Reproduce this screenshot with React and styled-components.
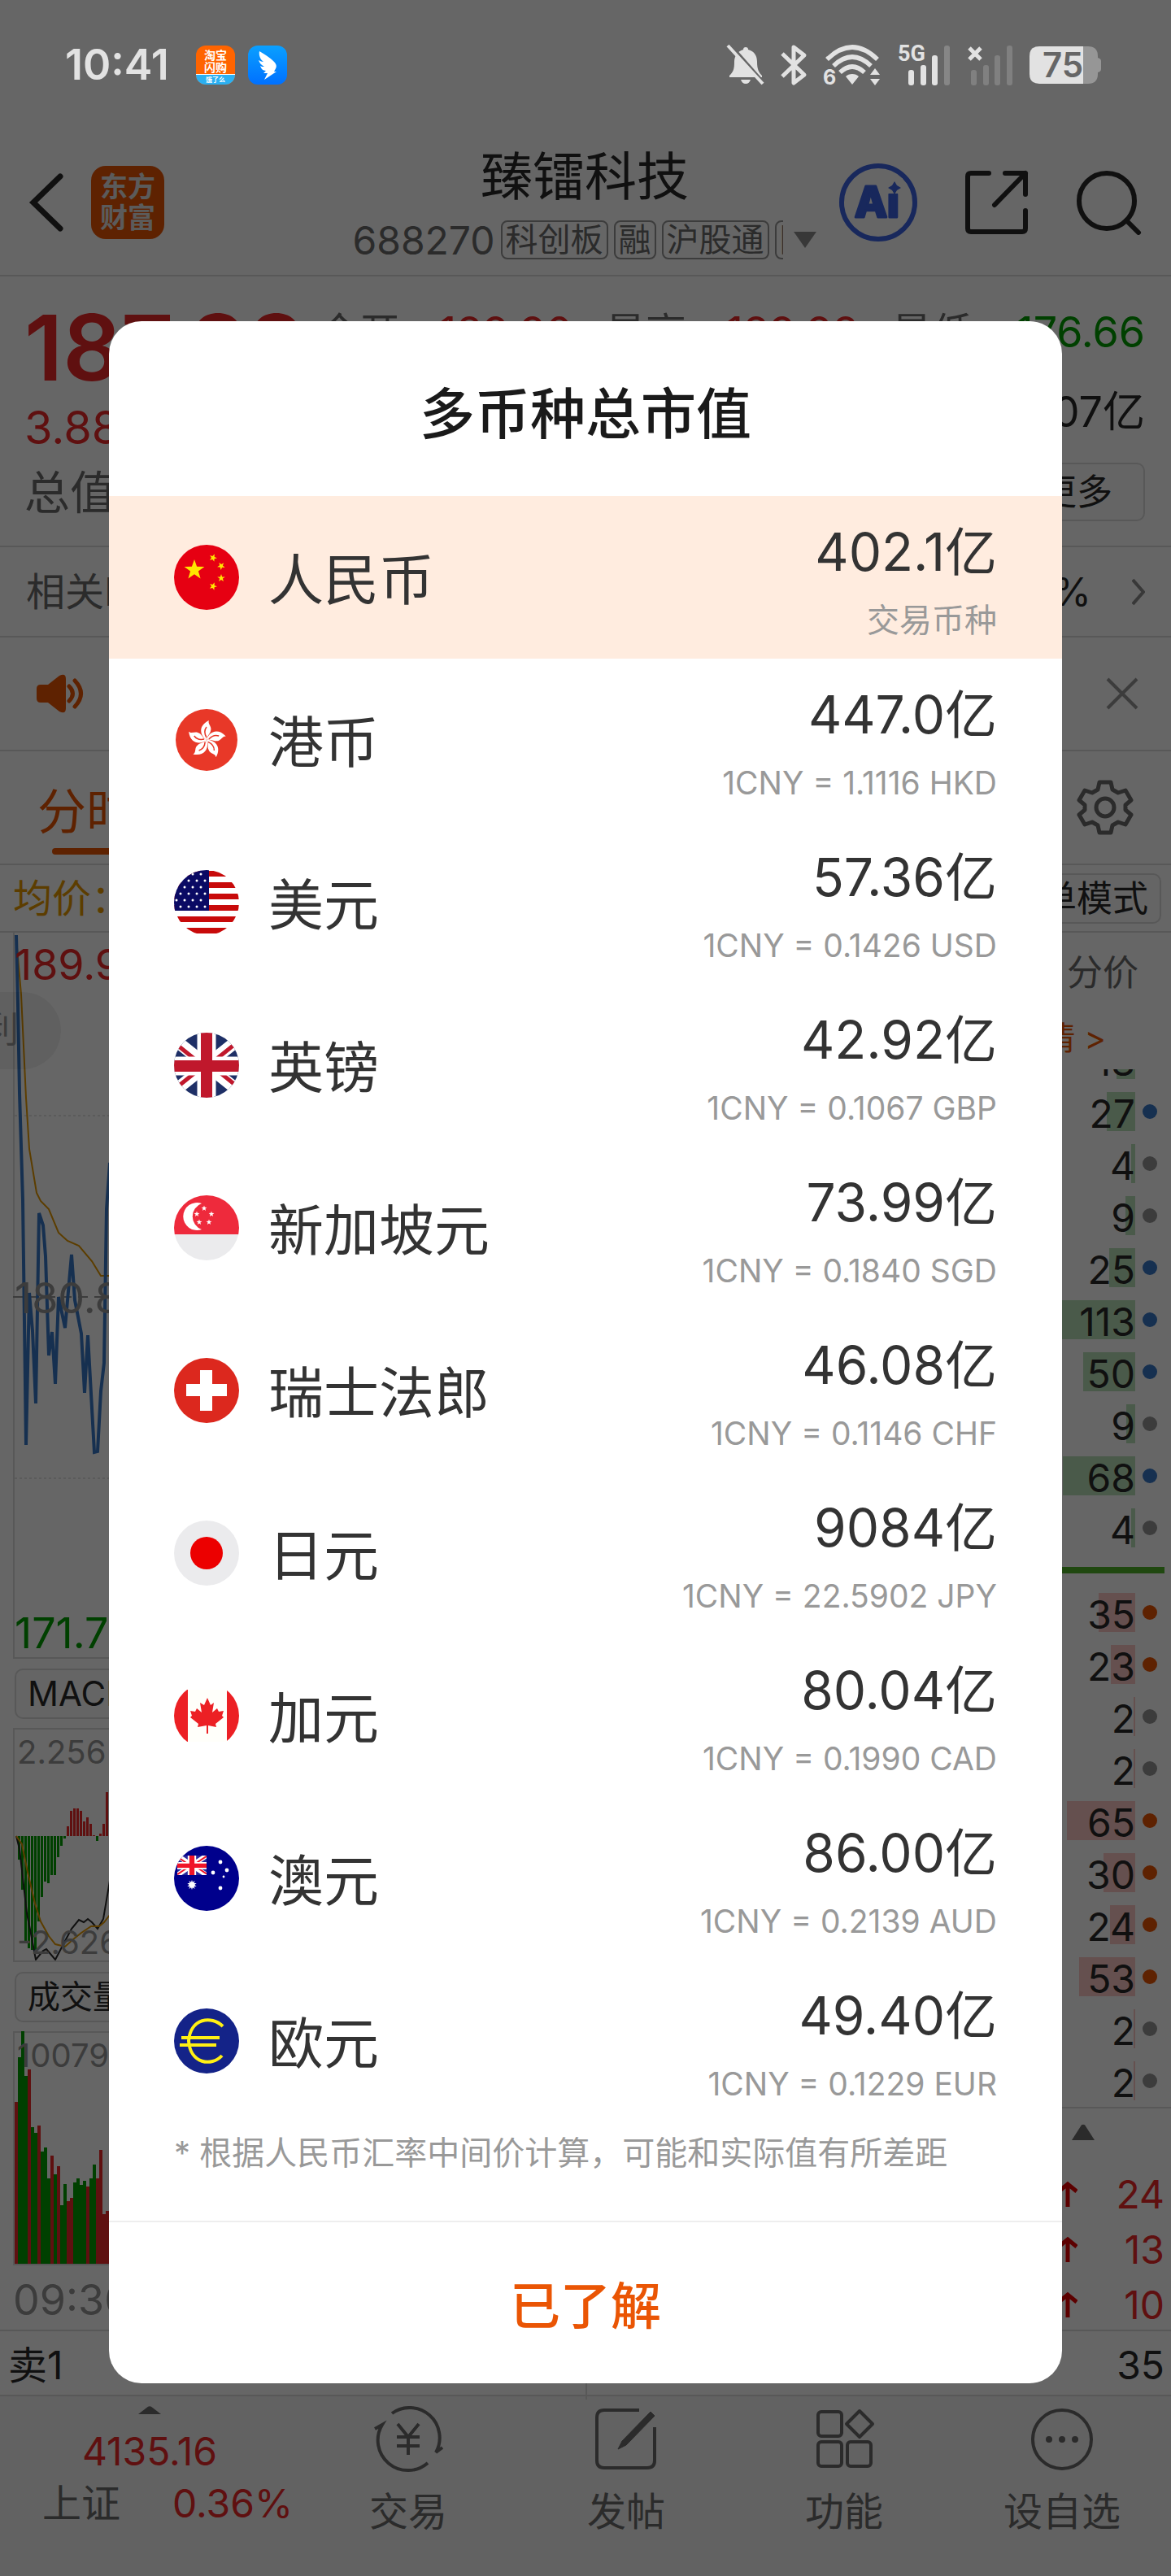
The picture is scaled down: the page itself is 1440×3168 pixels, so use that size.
import React from "react";
import styled, { createGlobalStyle, css } from "styled-components";

const c = {
  ink: "#2a2a2a",
  grey: "#6b6b6b",
  faint: "#969696",
  line: "#dcdcdc",
  red: "#ee2828",
  green: "#00a000",
  orange: "#ea5504",
  amber: "#e69a00",
  blue: "#3778c8",
};

const Global = createGlobalStyle`
  * { box-sizing: border-box; }
  body { margin: 0; background: #fff; }
  body, button { font-family: Inter, "Noto Sans CJK SC", sans-serif; }
  button { padding: 0; border: 0; background: none; color: inherit; cursor: pointer; }
  ul, h1, h2, p { margin: 0; padding: 0; font-weight: 400; list-style: none; }
  svg { display: block; flex: none; }
`;

const Screen = styled.div`
  position: relative;
  color: ${c.ink};
  background: #fff;
`;

/* ---------- status bar ---------- */
const StatusBar = styled.div`
  position: relative;
  z-index: 2;
  display: flex;
  align-items: center;
  height: 160px;
  padding: 0 86px 0 80px;
  color: #e2e2e2;
`;
const Clock = styled.span`
  width: 161px;
  font-size: 52px;
  font-weight: 600;
  line-height: 60px;
`;
const AppIcon = styled.span`
  display: flex;
  flex-direction: column;
  width: 48px;
  height: 48px;
  margin-right: 16px;
  border-radius: 12px;
  overflow: hidden;
  background: ${(p) => p.$bg};
  color: #fff;
  font-size: 14px;
  font-weight: 700;
  line-height: 15px;
  text-align: center;
`;
const AppIconTop = styled.span`
  flex: 1;
  padding-top: 4px;
  white-space: pre-line;
`;
const AppIconFoot = styled.span`
  border-top: 1px solid #fff;
  background: #2bb0f2;
  font-size: 8px;
  line-height: 12px;
`;
const StatusIcons = styled.div`
  display: flex;
  align-items: center;
  margin-left: auto;
  gap: 20px;
  svg { overflow: visible; }
`;

/* ---------- header ---------- */
const Header = styled.header`
  display: grid;
  grid-template-columns: 1fr auto 1fr;
  align-items: center;
  height: 180px;
  padding: 0 36px 0 34px;
  border-bottom: 2px solid ${c.line};
`;
const HeaderLeft = styled.div`
  display: flex;
  align-items: center;
  gap: 32px;
`;
const HeaderRight = styled.div`
  display: flex;
  align-items: center;
  justify-content: flex-end;
  gap: 58px;
`;
const BrandMark = styled.span`
  width: 90px;
  height: 90px;
  padding-top: 7px;
  border-radius: 18px;
  background: ${c.orange};
  color: #e4e4e4;
  font-size: 34px;
  font-weight: 700;
  line-height: 38px;
  text-align: center;
`;
const StockHeading = styled.div`
  display: flex;
  flex-direction: column;
  align-items: center;
  gap: 18px;
  padding-top: 2px;
`;
const StockName = styled.h1`
  font-size: 64px;
  line-height: 72px;
`;
const StockMeta = styled.div`
  display: flex;
  align-items: center;
  gap: 7px;
  height: 48px;
  color: ${c.grey};
  font-size: 48px;
`;
const Tag = styled.span`
  flex: none;
  height: 48px;
  padding: 0 4px;
  border: 2px solid ${c.faint};
  border-radius: 8px;
  font-size: 40px;
  line-height: 44px;
`;
const TagClip = styled.span`
  display: flex;
  width: 10px;
  margin-right: 5px;
  overflow: hidden;
`;
const IconButton = styled.button`
  display: flex;
  align-items: center;
  justify-content: center;
`;

/* ---------- quote ---------- */
const Quote = styled.section`
  display: flex;
  justify-content: space-between;
  gap: 32px;
  height: 333px;
  padding: 20px 32px 0 30px;
  border-bottom: 2px solid ${c.line};
`;
const PriceColumn = styled.div`
  flex: none;
  width: 330px;
`;
const Price = styled.div`
  color: ${c.red};
  font-size: 112px;
  font-weight: 600;
  line-height: 134px;
`;
const Change = styled.div`
  color: ${c.red};
  font-size: 56px;
  line-height: 64px;
`;
const Cap = styled.div`
  color: ${c.grey};
  font-size: 56px;
  line-height: 96px;
`;
const Stats = styled.div`
  flex: 1;
  display: grid;
  grid-template-columns: repeat(3, 1fr);
  grid-auto-rows: 98px;
  column-gap: 40px;
  align-items: center;
`;
const Stat = styled.div`
  display: flex;
  justify-content: space-between;
  color: ${c.grey};
  font-size: 50px;
  line-height: 60px;
`;
const StatValue = styled.span`
  color: ${(p) => p.$color || c.ink};
  font-size: 52px;
`;
const Outline = styled.button`
  height: ${(p) => p.$h || 62}px;
  padding: 0 ${(p) => p.$pad || 14}px;
  border: 2px solid ${c.line};
  border-radius: 10px;
  background: #fcfcfc;
  color: ${c.ink};
  font-size: ${(p) => p.$size || 44}px;
  line-height: 56px;
  white-space: nowrap;
`;
const MoreCell = styled.div`
  grid-column: 3;
  text-align: right;
`;
const Strip = styled.div`
  display: flex;
  align-items: center;
  justify-content: space-between;
  height: ${(p) => p.$h}px;
  padding: 0 ${(p) => p.$r || 32}px 0 ${(p) => p.$l || 32}px;
  border-bottom: 2px solid ${c.line};
  color: ${(p) => p.$color || c.grey};
  font-size: 48px;
  line-height: 56px;
`;
const StripEnd = styled.span`
  display: flex;
  align-items: center;
  gap: 50px;
  color: ${c.ink};
`;
const ActiveTab = styled.button`
  align-self: stretch;
  display: flex;
  flex-direction: column;
  align-items: center;
  justify-content: flex-end;
  gap: 13px;
  padding-bottom: 11px;
  color: ${c.orange};
  font-size: 60px;
  line-height: 64px;
  &::after {
    content: "";
    width: 84px;
    height: 8px;
    border-radius: 4px;
    background: ${c.orange};
  }
`;

/* ---------- chart area ---------- */
const Body = styled.section`
  position: relative;
  display: flex;
  justify-content: space-between;
  border-bottom: 2px solid ${c.line};
`;
const Charts = styled.div`
  width: 50%;
`;
const ChartBox = styled.div`
  position: relative;
  height: ${(p) => p.$h}px;
  margin-left: 16px;
  border: solid ${c.line};
  border-width: 0 0 2px 2px;
`;
const Drawing = styled.svg`
  margin-left: -18px;
`;
const AxisLabel = styled.span`
  position: absolute;
  left: ${(p) => (p.$small ? 3 : 0)}px;
  ${(p) => css`${p.$edge || "top"}: ${p.$gap}px;`}
  color: ${(p) => p.$color || c.faint};
  font-size: ${(p) => (p.$small ? 40 : 52)}px;
  line-height: ${(p) => (p.$small ? 48 : 60)}px;
`;
const Picker = styled.div`
  display: flex;
  align-items: center;
  height: 85px;
  padding-left: 18px;
`;
const TimeAxis = styled.div`
  height: 79px;
  padding-left: 16px;
  color: ${c.faint};
  font-size: 52px;
  line-height: 86px;
`;
const Pill = styled.span`
  position: absolute;
  left: 0;
  top: 73px;
  width: 75px;
  height: 95px;
  border-radius: 0 48px 48px 0;
  background: rgba(0, 0, 0, 0.06);
  color: ${c.faint};
  font-size: 44px;
  line-height: 92px;
  direction: rtl;
  padding-right: 52px;
  overflow: hidden;
`;
const Depth = styled.div`
  display: flex;
  flex-direction: column;
  width: 300px;
  padding-right: 8px;
`;
const DepthTab = styled.div`
  padding-right: 32px;
  color: ${c.grey};
  font-size: 44px;
  line-height: 98px;
  text-align: right;
`;
const DepthLink = styled.a`
  padding-right: 72px;
  color: ${c.orange};
  font-size: 40px;
  line-height: 64px;
  height: 70px;
  text-align: right;
  text-decoration: none;
`;
const Clipped = styled.ul`
  display: flex;
  flex-direction: column;
  justify-content: flex-end;
  height: 20px;
  overflow: hidden;
`;
const TradeRow = styled.li`
  display: flex;
  flex: none;
  align-items: center;
  justify-content: flex-end;
  gap: 9px;
  height: 64px;
  padding-right: 9px;
`;
const Volume = styled.span`
  display: flex;
  justify-content: flex-end;
  width: 200px;
  height: 48px;
  background: linear-gradient(${(p) => p.$bg}, ${(p) => p.$bg}) right / ${(p) => p.$bar}px 100% no-repeat;
  font-size: 48px;
  line-height: 54px;
`;
const Dot = styled.span`
  width: 18px;
  height: 18px;
  border-radius: 50%;
  background: ${(p) => p.$color};
`;
const Split = styled.div`
  height: 8px;
  margin: 16px 0;
  background: #50b428;
`;
const DepthFoot = styled.div`
  height: 70px;
  margin-right: -8px;
  padding: 19px 0 0 178px;
  border-top: 2px solid ${c.line};
`;
const Tick = styled.div`
  display: flex;
  align-items: center;
  justify-content: space-between;
  height: 68px;
  padding: 6px 0 0 161px;
  color: ${c.red};
  font-size: 48px;
`;
const Asks = styled.section`
  display: grid;
  grid-template-columns: 1fr 1fr;
  height: 80px;
  border-bottom: 2px solid ${c.line};
  font-size: 48px;
  line-height: 84px;
`;
const Ask = styled.span`
  padding: 0 8px 0 10px;
  text-align: ${(p) => (p.$end ? "right" : "left")};
  border-left: ${(p) => (p.$end ? `2px solid ${c.line}` : 0)};
`;

/* ---------- bottom navigation ---------- */
const Nav = styled.nav`
  display: grid;
  grid-template-columns: 368fr 268fr 268fr 268fr 268fr;
  height: 221px;
  background: #f6f6f6;
  color: ${c.grey};
`;
const NavItem = styled.button`
  display: flex;
  flex-direction: column;
  align-items: center;
  gap: 16px;
  padding-top: 12px;
  font-size: 48px;
  line-height: 64px;
`;
const Index = styled.div`
  display: flex;
  flex-direction: column;
  align-items: center;
  padding-top: 12px;
  font-size: 48px;
  line-height: 64px;
`;
const IndexValue = styled.span`
  padding-top: 14px;
  color: ${c.red};
`;
const IndexRow = styled.span`
  display: flex;
  gap: 64px;
  padding-left: 44px;
`;
const Up = styled.span`
  color: ${c.red};
`;

/* ---------- dialog ---------- */
const Overlay = styled.div`
  position: absolute;
  inset: 0;
  z-index: 1;
  display: flex;
  align-items: center;
  padding: 158px 134px 0;
  background: rgba(0, 0, 0, 0.6);
`;
const Dialog = styled.div`
  flex: 1;
  overflow: hidden;
  border-radius: 40px;
  background: #fff;
  color: #333;
`;
const DialogTitle = styled.h2`
  padding-top: 70px;
  height: 215px;
  color: #1a1a1a;
  font-size: 68px;
  font-weight: 500;
  line-height: 88px;
  text-align: center;
`;
const Row = styled.li`
  display: flex;
  align-items: center;
  height: 200px;
  padding: 0 80px;
  background: ${(p) => (p.$active ? "#ffecdf" : "#fff")};
`;
const Name = styled.span`
  flex: 1;
  padding: 6px 0 0 36px;
  font-size: 68px;
  line-height: 84px;
`;
const Amounts = styled.div`
  padding-top: 12px;
  text-align: right;
`;
const Amount = styled.div`
  font-size: 64px;
  line-height: 94px;
`;
const Rate = styled.div`
  color: #999;
  font-size: ${(p) => (p.$latin ? 39 : 40)}px;
  line-height: 74px;
`;
const Note = styled.p`
  height: 121px;
  padding: 10px 80px 0;
  color: #999;
  font-size: 40px;
  line-height: 56px;
  white-space: nowrap;
`;
const Confirm = styled.button`
  display: block;
  width: 100%;
  height: 200px;
  border-top: 2px solid #eee;
  color: ${c.orange};
  font-size: 62px;
  font-weight: 500;
`;

/* ---------- flags ---------- */
const star = (cx, cy, r, rot = 0) =>
  Array.from({ length: 10 }, (_, i) => {
    const a = ((i * 36 - 90 + rot) * Math.PI) / 180;
    const q = i % 2 ? r * 0.4 : r;
    return `${(cx + q * Math.cos(a)).toFixed(1)},${(cy + q * Math.sin(a)).toFixed(1)}`;
  }).join(" ");

const Union = ({ red, blue }) => (
  <>
    <rect width="80" height="80" fill={blue} />
    <path d="M0 8 80 72M80 8 0 72" stroke="#fff" strokeWidth="15" />
    <path d="M0 12 36 41M80 68 44 39M0 70 36 41M80 10 44 39" stroke={red} strokeWidth="5" />
    <path d="M40 0V80M0 41H80" stroke="#fff" strokeWidth="23" />
    <path d="M40 0V80M0 41H80" stroke={red} strokeWidth="14" />
  </>
);

const flags = {
  cn: (
    <>
      <rect width="80" height="80" fill="#e60012" />
      <g fill="#ffe600">
        <polygon points={star(25, 31, 13)} />
        <polygon points={star(48, 16, 5, 20)} />
        <polygon points={star(58, 26, 5, 40)} />
        <polygon points={star(58, 41, 5)} />
        <polygon points={star(48, 51, 5, 20)} />
      </g>
    </>
  ),
  hk: (
    <>
      <circle cx="40" cy="40" r="38" fill="#e83828" />
      {[0, 72, 144, 216, 288].map((r) => (
        <g key={r} transform={`rotate(${r} 40 40)`}>
          <path d="M40 40C33 36 28 23 43 16c-2 5 4 7 2 13-1 4-4 5-5 11z" fill="#fff" />
          <path d="M40 37c-3-5-3-9 0-13" fill="none" stroke="#e83828" strokeWidth="1.5" />
        </g>
      ))}
    </>
  ),
  us: (
    <>
      <rect width="80" height="80" fill="#fff" />
      {[1, 15, 29, 43, 57, 71].map((y) => (
        <rect key={y} y={y} width="80" height="7" fill="#c80a0a" />
      ))}
      <rect width="43" height="50" fill="#0a0a64" />
      {[5, 13, 21, 29, 37, 45].map((y, j) =>
        [3, 13, 23, 33].map((x) => <circle key={`${x}-${y}`} cx={x + (j % 2) * 5} cy={y} r="1.5" fill="#fff" />)
      )}
    </>
  ),
  gb: <Union red="#c0182c" blue="#1e2f66" />,
  sg: (
    <>
      <rect width="80" height="48" fill="#ee2a3c" />
      <rect y="48" width="80" height="32" fill="#ebebed" />
      <path d="M34 10a17 17 0 1 0 0 32 17 17 0 0 1 0-32z" fill="#fff" />
      {[[37, 16], [28, 23], [46, 23], [31, 33], [43, 33]].map(([x, y]) => (
        <polygon key={`${x}${y}`} points={star(x, y, 3.6)} fill="#fff" />
      ))}
    </>
  ),
  ch: (
    <>
      <rect width="80" height="80" fill="#dc281e" />
      <path d="M32 15h15v17h18v15H47v18H32V47H15V32h17z" fill="#fff" />
    </>
  ),
  jp: (
    <>
      <rect width="80" height="80" fill="#ebebed" />
      <circle cx="40" cy="40" r="20" fill="#ec0000" />
    </>
  ),
  ca: (
    <>
      <rect y="8" width="80" height="64" fill="#fffffa" />
      <path d="M0 8h17v64H0zM65 8h15v64H65z" fill="#ec2024" />
      <path
        d="M41 18 45 27 49 24 47 36 53 31 55 35 61 34 59 40 61 42 51 50 52 54 42 52 42 62H40L40 52 29 54 30 50 20 42 22 40 20 34 26 35 28 31 34 36 32 24 37 27Z"
        fill="#ec2024"
      />
    </>
  ),
  au: (
    <>
      <rect width="80" height="80" fill="#00008c" />
      <svg x="4" y="12" width="36" height="24" viewBox="0 8 80 64" preserveAspectRatio="none">
        <Union red="#f01428" blue="#28289c" />
      </svg>
      <g fill="#fff">
        <polygon points={star(22, 48, 6)} />
        <polygon points={star(22, 48, 6, 36)} />
        <circle cx="57" cy="20" r="2.4" />
        <circle cx="65" cy="30" r="2.4" />
        <circle cx="48" cy="33" r="2.4" />
        <circle cx="61" cy="38" r="1.4" />
        <circle cx="57" cy="52" r="2.4" />
      </g>
    </>
  ),
  eu: (
    <>
      <rect width="80" height="80" fill="#142388" />
      <g fill="none" stroke="#fff014" strokeWidth="4">
        <path d="M60 22C46 8 20 12 18 40c2 28 28 32 41 18" />
        <path d="M9 36H56M7 45H52" strokeWidth="4" />
      </g>
    </>
  ),
};

const Flag = ({ code }) => (
  <svg width="80" height="80" viewBox="0 0 80 80" aria-hidden="true">
    <clipPath id={`round-${code}`}>
      <circle cx="40" cy="40" r="40" />
    </clipPath>
    <g clipPath={`url(#round-${code})`}>{flags[code]}</g>
  </svg>
);

/* ---------- data ---------- */
const currencies = [
  ["cn", "人民币", "402.1亿", "交易币种"],
  ["hk", "港币", "447.0亿", "1CNY = 1.1116 HKD"],
  ["us", "美元", "57.36亿", "1CNY = 0.1426 USD"],
  ["gb", "英镑", "42.92亿", "1CNY = 0.1067 GBP"],
  ["sg", "新加坡元", "73.99亿", "1CNY = 0.1840 SGD"],
  ["ch", "瑞士法郎", "46.08亿", "1CNY = 0.1146 CHF"],
  ["jp", "日元", "9084亿", "1CNY = 22.5902 JPY"],
  ["ca", "加元", "80.04亿", "1CNY = 0.1990 CAD"],
  ["au", "澳元", "86.00亿", "1CNY = 0.2139 AUD"],
  ["eu", "欧元", "49.40亿", "1CNY = 0.1229 EUR"],
];
const sells = [[27, 35, 1], [4, 5], [9, 12], [25, 32, 1], [113, 145, 1], [50, 64, 1], [9, 11], [68, 89, 1], [4, 5]];
const buys = [[35, 45, 1], [23, 30, 1], [2, 2], [2, 2], [65, 84, 1], [30, 39, 1], [24, 31, 1], [53, 69, 1], [2, 2], [2, 2]];
const macd = [-29, -66, -130, -138, -140, -140, -105, -75, -56, -58, -48, -48, -26, -12, -3, 12, 31, 34, 34, 31, 18, 23, 15, 1, -6, 3, 15, 54];
const volumes = [199, -254, -287, -231, 239, -168, -161, 170, -138, -143, -105, 133, -110, 120, -72, -98, 77, 81, -100, -105, -97, -102, 95, -105, -122, 105, 140, 61, 65, 138];

const Trades = ({ rows, bg, dot }) =>
  rows.map(([n, bar, big], i) => (
    <TradeRow key={i}>
      <Volume $bar={bar} $bg={bg}>{n}</Volume>
      <Dot $color={big ? dot : c.faint} />
    </TradeRow>
  ));

const Triangle = ({ w = 28, h = 16, down, color = c.grey }) => (
  <svg width={w} height={h} viewBox="0 0 28 16" preserveAspectRatio="none" aria-hidden="true">
    <path d={down ? "M1 0H27L14 16z" : "M0 16H28L16 1Q14 0 12 1z"} fill={color} />
  </svg>
);

const StatusGlyphs = () => (
  <StatusIcons>
    <svg width="46" height="50" viewBox="0 0 46 50" fill="#e2e2e2">
      <path d="M23 3c2 0 3 1 3 3 8 2 11 8 11 15 0 9 2 13 6 17v2H3v-2c5-5 6-8 6-17C9 14 13 8 20 6c0-2 1-3 3-3zM17 43h12c-1 3-3 5-6 5s-5-2-6-5z" />
      <path d="M4 0 48 50" stroke="#666" strokeWidth="4" />
      <path d="M1 1 44 48" stroke="#e2e2e2" strokeWidth="4" />
    </svg>
    <svg width="32" height="50" viewBox="0 0 32 50" fill="none" stroke="#e2e2e2" strokeWidth="5" strokeLinejoin="round">
      <path d="M2 11 29 37 16 47V3L29 13 2 39" />
    </svg>
    <svg width="72" height="50" viewBox="0 0 72 50" fill="none" stroke="#e2e2e2" strokeWidth="5.5">
      <path d="M5 18Q36-12 67 18M13 26Q36 4 59 26M21 34Q36 20 51 34" />
      <path d="M36 36q5 0 8 3l-8 10-8-10q3-3 8-3zM64 29l6 8H58zM64 50l6-8H58z" fill="#e2e2e2" stroke="none" />
      <text x="0" y="49" fill="#e2e2e2" stroke="none" fontSize="25" fontWeight="700">6</text>
    </svg>
    <svg width="66" height="50" viewBox="0 0 66 50" fill="#e2e2e2">
      <text x="0" y="20" fontSize="27" fontWeight="700" fontFamily="Roboto">5G</text>
      <rect x="13" y="31" width="7" height="19" rx="3" />
      <rect x="28" y="25" width="7" height="25" rx="3" />
      <rect x="42" y="13" width="7" height="37" rx="3" />
      <rect x="57" y="1" width="7" height="49" rx="3" fill="#868686" />
    </svg>
    <svg width="56" height="50" viewBox="0 0 56 50" fill="#808080">
      <path d="M2 4 16 18M16 4 2 18" stroke="#e2e2e2" strokeWidth="5" />
      <rect x="4" y="31" width="7" height="19" rx="3" />
      <rect x="19" y="25" width="7" height="25" rx="3" />
      <rect x="33" y="13" width="7" height="37" rx="3" />
      <rect x="48" y="1" width="7" height="49" rx="3" />
    </svg>
    <svg width="88" height="46" viewBox="0 0 88 46">
      <path d="M66 0h6q12 0 12 12v2q4 1 4 4v10q0 3-4 4v2q0 12-12 12h-6z" fill="#969696" />
      <path d="M66 0H12Q0 0 0 12v22q0 12 12 12h54z" fill="#e2e2e2" />
      <text x="16" y="38" fontSize="42" fontWeight="600" fill="#666">75</text>
    </svg>
  </StatusIcons>
);

export default function App() {
  return (
    <Screen>
      <Global />
      <StatusBar>
        <Clock>10:41</Clock>
        <AppIcon $bg="#ff6400">
          <AppIconTop>{"淘宝\n闪购"}</AppIconTop>
          <AppIconFoot>饿了么</AppIconFoot>
        </AppIcon>
        <AppIcon $bg="linear-gradient(#0aa0ff, #0070ff)">
          <svg width="48" height="48" viewBox="0 0 48 48" fill="#fff">
            <path d="M14 7c8 5 15 9 19 14 3 4 2 6-1 11h3L20 42l4-8h-5l3-3c-4 0-6-3-7-6 1 1 3 1 5 1-4-2-6-5-7-8 2 1 4 2 6 2-4-3-6-8-5-13z" />
          </svg>
        </AppIcon>
        <StatusGlyphs />
      </StatusBar>

      <Header>
        <HeaderLeft>
          <IconButton aria-label="返回">
            <svg width="46" height="76" viewBox="0 0 46 76" fill="none" stroke={c.ink} strokeWidth="7" strokeLinecap="round">
              <path d="M40 6 7 38 40 70" />
            </svg>
          </IconButton>
          <BrandMark>东方<br />财富</BrandMark>
        </HeaderLeft>
        <StockHeading>
          <StockName>臻镭科技</StockName>
          <StockMeta>
            <span>688270</span>
            <Tag>科创板</Tag>
            <Tag>融</Tag>
            <Tag>沪股通</Tag>
            <TagClip><Tag>国</Tag></TagClip>
            <Triangle w={30} h={20} down color="#8c8c8c" />
          </StockMeta>
        </StockHeading>
        <HeaderRight>
          <IconButton aria-label="Ai">
            <svg width="96" height="96" viewBox="0 0 96 96">
              <circle cx="48" cy="48" r="45" fill="none" stroke="#3c64e6" strokeWidth="6" />
              <text x="19" y="66" fontSize="52" fontWeight="800" fill="#3c64e6" stroke="#3c64e6" strokeWidth="3" strokeLinejoin="round">Ai</text>
              <rect x="58" y="18" width="20" height="19" fill="#fff" />
              <path d="M68 22l3 5 5 3-5 3-3 5-3-5-5-3 5-3z" fill="#3c64e6" />
            </svg>
          </IconButton>
          <IconButton aria-label="分享">
            <svg width="80" height="80" viewBox="0 0 80 80" fill="none" stroke={c.ink} strokeWidth="6" strokeLinecap="round" strokeLinejoin="round">
              <path d="M30 4H8q-4 0-4 4V72q0 4 4 4H71q4 0 4-4V50M50 4H75V30M75 4 37 43" />
            </svg>
          </IconButton>
          <IconButton aria-label="搜索">
            <svg width="80" height="80" viewBox="0 0 80 80" fill="none" stroke={c.ink} strokeWidth="6" strokeLinecap="round">
              <circle cx="37" cy="38" r="34" />
              <path d="M61 62 76 77" />
            </svg>
          </IconButton>
        </HeaderRight>
      </Header>

      <Quote>
        <PriceColumn>
          <Price>187.88</Price>
          <Change>3.88</Change>
          <Cap>总值</Cap>
        </PriceColumn>
        <Stats>
          <Stat>今开<StatValue $color={c.red}>189.90</StatValue></Stat>
          <Stat>最高<StatValue $color={c.red}>189.98</StatValue></Stat>
          <Stat>最低<StatValue $color={c.green}>176.66</StatValue></Stat>
          <Stat />
          <Stat />
          <Stat><span /><StatValue>8.07亿</StatValue></Stat>
          <MoreCell><Outline $h={72} $pad={38}>更多</Outline></MoreCell>
        </Stats>
      </Quote>

      <Strip $h={111}>
        <span>相关ETF</span>
        <StripEnd>
          0.36%
          <svg width="16" height="34" viewBox="0 0 16 34" fill="none" stroke="#8c8c8c" strokeWidth="4">
            <path d="M1 2 14 17 1 32" />
          </svg>
        </StripEnd>
      </Strip>
      <Strip $h={140} $l={44} $r={40}>
        <svg width="60" height="50" viewBox="0 0 60 50" fill={c.orange}>
          <path d="M6 14h9L29 3q8-4 8 4v36q0 8-8 4L15 36H6q-5 0-5-5V19q0-5 5-5z" />
          <path d="M41 16q9 9 0 18M48 9q15 16 0 32" fill="none" stroke={c.orange} strokeWidth="5" strokeLinecap="round" />
        </svg>
        <IconButton aria-label="关闭提示">
          <svg width="40" height="40" viewBox="0 0 40 40" stroke={c.faint} strokeWidth="4">
            <path d="M2 2 38 38M38 2 2 38" />
          </svg>
        </IconButton>
      </Strip>
      <Strip $h={140} $l={46} $r={46}>
        <ActiveTab>分时</ActiveTab>
        <IconButton aria-label="设置">
          <svg width="70" height="70" viewBox="0 0 70 70" fill="none" stroke={c.grey} strokeWidth="5" strokeLinejoin="round">
            <path d="M28 4H42L44 13 51 17 60 14 67 26 60 32V38L67 44 60 56 51 53 44 57 42 66H28L26 57 19 53 10 56 3 44 10 38V32L3 26 10 14 19 17 26 13Z" />
            <circle cx="35" cy="35" r="11" />
          </svg>
        </IconButton>
      </Strip>
      <Strip $h={83} $l={16} $r={12} $color={c.amber}>
        <span>均价：</span>
        <Outline>简单模式</Outline>
      </Strip>

      <Body>
        <Charts>
          <ChartBox $h={893}>
            <Drawing width="150" height="891" viewBox="0 0 150 891" fill="none">
              <path d="M18 225H150M18 671H150" stroke="#c8c8c8" strokeDasharray="3 3" />
              <path d="M16 448H150" stroke={c.faint} strokeWidth="2" strokeDasharray="12 8" />
              <polyline stroke={c.amber} strokeWidth="2" points="20,7 26,76 32,203 36,266 45,320 50,330 60,340 72,369 83,379 97,385 113,404 124,422 150,422" />
              <polyline
                stroke={c.blue}
                strokeWidth="4"
                points="20,3 22,88 24,197 28,329 32,630 36,443 40,490 44,579 48,345 53,360 56,398 60,520 64,491 68,555 72,448 80,486 88,396 92,452 100,493 104,566 108,495 116,639 120,638 124,564 128,529 131,340 135,283"
              />
            </Drawing>
            <AxisLabel $gap={10} $color={c.red}>189.98</AxisLabel>
            <AxisLabel $gap={420}>180.80</AxisLabel>
            <AxisLabel $edge="bottom" $gap={-1} $color={c.green}>171.77</AxisLabel>
          </ChartBox>
          <Picker><Outline $size={42}>MACD</Outline></Picker>
          <ChartBox $h={288}>
            <Drawing width="150" height="286" viewBox="0 0 150 286" fill="none">
              <path d="M16 1H150" stroke={c.line} strokeWidth="2" />
              {macd.map((v, i) => (
                <rect key={i} x={22 + i * 4} y={v > 0 ? 133 - v : 133} width="3" height={Math.abs(v)} fill={v > 0 ? c.red : c.green} />
              ))}
              <polyline stroke={c.ink} strokeWidth="2" points="20,133 24,149 33,228 38,253 44,285 53,274 57,272 68,285 80,262 88,247 97,236 103,239 108,235 113,239 120,247 127,235 135,188" />
              <polyline stroke={c.amber} strokeWidth="2" points="20,133 27,143 33,173 43,216 50,238 60,256 68,266 80,269 90,260 100,252 112,244 122,244 128,239 135,230" />
            </Drawing>
            <AxisLabel $small $gap={6}>2.256</AxisLabel>
            <AxisLabel $small $edge="bottom" $gap={-2}>-2.626</AxisLabel>
          </ChartBox>
          <Picker><Outline $size={40}>成交量</Outline></Picker>
          <ChartBox $h={288}>
            <Drawing width="150" height="286" viewBox="0 0 150 286">
              <path d="M16 1H150" stroke={c.line} strokeWidth="2" />
              {volumes.map((v, i) => (
                <rect key={i} x={18 + i * 4} y={286 - Math.abs(v)} width="4" height={Math.abs(v)} fill={v > 0 ? c.red : c.green} />
              ))}
            </Drawing>
            <AxisLabel $small $gap={6}>10079</AxisLabel>
          </ChartBox>
          <TimeAxis>09:30</TimeAxis>
          <Pill>利</Pill>
        </Charts>
        <Depth>
          <DepthTab>分价</DepthTab>
          <DepthLink href="#detail">详情 &gt;</DepthLink>
          <Clipped><Trades rows={[[18, 23]]} bg="#b9e1b9" dot={c.blue} /></Clipped>
          <ul><Trades rows={sells} bg="#b9e1b9" dot={c.blue} /></ul>
          <Split />
          <ul><Trades rows={buys} bg="#fdc8c5" dot={c.orange} /></ul>
          <DepthFoot><Triangle h={20} /></DepthFoot>
          {[24, 13, 10].map((n) => (
            <Tick key={n}>
              <svg width="24" height="32" viewBox="0 0 24 32" fill="none" stroke="#e60000" strokeWidth="5">
                <path d="M12 32V4M1 13 12 4 23 13" />
              </svg>
              {n}
            </Tick>
          ))}
        </Depth>
      </Body>

      <Asks>
        <Ask>卖1</Ask>
        <Ask $end>35</Ask>
      </Asks>

      <Nav>
        <Index>
          <Triangle h={10} />
          <IndexValue>4135.16</IndexValue>
          <IndexRow>上证<Up>0.36%</Up></IndexRow>
        </Index>
        <NavItem>
          <svg width="88" height="82" viewBox="0 0 88 82" fill="none" stroke={c.grey} strokeWidth="4">
            <path d="M24 9A37 37 0 0 1 78 57l8-6M68 70A37 37 0 0 1 12 23l-9 5" />
            <path d="M31 22 44 38 57 22M44 38V60M30 38H58M30 49H58" />
          </svg>
          交易
        </NavItem>
        <NavItem>
          <svg width="80" height="82" viewBox="0 0 80 82" fill="none" stroke={c.grey} strokeWidth="4">
            <path d="M56 5H13q-9 0-9 9V67q0 9 9 9H66q9 0 9-9V26" />
            <path d="M70 7 35 43l-5 10 10-5L75 12z" fill={c.grey} strokeWidth="1" />
          </svg>
          发帖
        </NavItem>
        <NavItem>
          <svg width="80" height="82" viewBox="0 0 80 82" fill="none" stroke={c.grey} strokeWidth="4">
            <rect x="8" y="7" width="29" height="30" rx="4" />
            <rect x="8" y="44" width="29" height="30" rx="4" />
            <rect x="44" y="44" width="29" height="30" rx="4" />
            <path d="M59 6 75 22 59 38 43 22z" strokeLinejoin="round" />
          </svg>
          功能
        </NavItem>
        <NavItem>
          <svg width="80" height="82" viewBox="0 0 80 82" fill="none" stroke={c.grey} strokeWidth="4">
            <circle cx="40" cy="41" r="36" />
            <g fill={c.grey} stroke="none">
              <circle cx="24" cy="41" r="4" />
              <circle cx="40" cy="41" r="4" />
              <circle cx="56" cy="41" r="4" />
            </g>
          </svg>
          设自选
        </NavItem>
      </Nav>

      <Overlay>
        <Dialog role="dialog" aria-modal="true" aria-labelledby="dialog-title">
          <DialogTitle id="dialog-title">多币种总市值</DialogTitle>
          <ul>
            {currencies.map(([code, name, amount, rate], i) => (
              <Row key={code} $active={i === 0}>
                <Flag code={code} />
                <Name>{name}</Name>
                <Amounts>
                  <Amount>{amount}</Amount>
                  <Rate $latin={i > 0}>{rate}</Rate>
                </Amounts>
              </Row>
            ))}
          </ul>
          <Note>* 根据人民币汇率中间价计算，可能和实际值有所差距</Note>
          <Confirm>已了解</Confirm>
        </Dialog>
      </Overlay>
    </Screen>
  );
}
